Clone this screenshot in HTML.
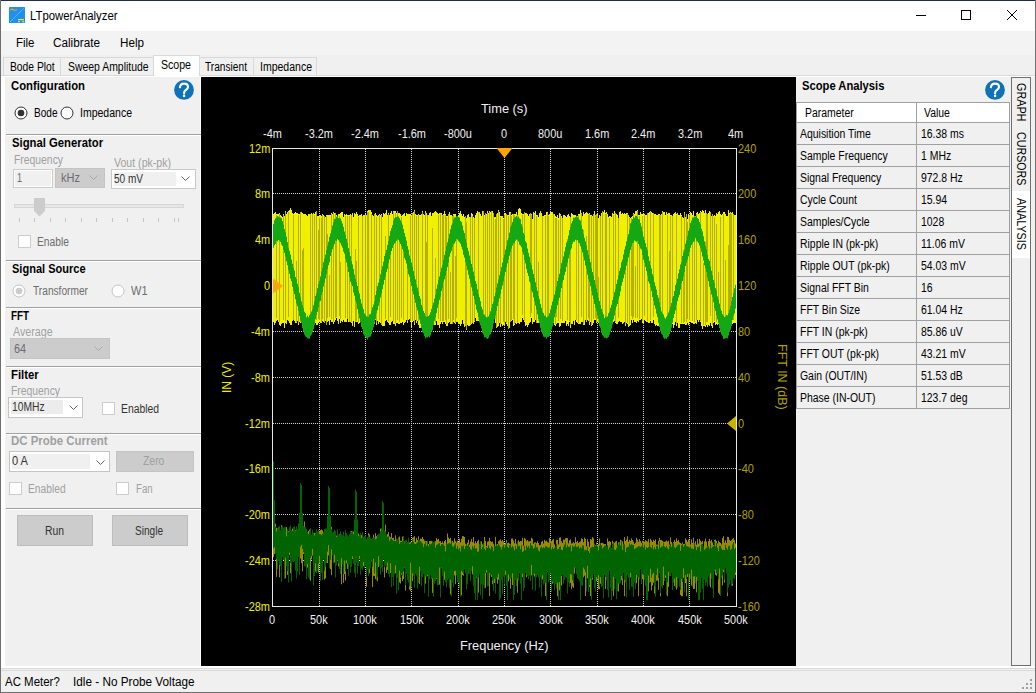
<!DOCTYPE html>
<html><head><meta charset="utf-8">
<style>
*{margin:0;padding:0;box-sizing:border-box;}
html,body{width:1036px;height:693px;overflow:hidden;background:#f0f0f0;font-family:"Liberation Sans",sans-serif;font-size:12px;color:#000;}
.a{position:absolute;white-space:nowrap;}
.t{position:absolute;white-space:nowrap;line-height:1;}
.b{font-weight:bold;}
.g{color:#a0a0a0;}
.sep{position:absolute;height:1px;background:#a0a0a0;border-bottom:1px solid #fff;}
</style></head><body>
<!-- window frame -->
<div class="a" style="left:0;top:0;width:1036px;height:693px;background:#f0f0f0;"></div>
<!-- title bar -->
<div class="a" style="left:0;top:0;width:1036px;height:31px;background:#fff;"></div>
<div class="a" style="left:0;top:0;width:1036px;height:1px;background:#1f2d47;"></div>
<div class="a" style="left:0;top:0;width:1px;height:693px;background:#6e6e6e;"></div>
<div class="a" style="left:1035px;top:0;width:1px;height:693px;background:#6e6e6e;"></div>
<div class="a" style="left:0;top:692px;width:1036px;height:1px;background:#6e6e6e;"></div>
<svg class="a" style="left:9px;top:7px" width="16" height="16" viewBox="0 0 16 16">
<rect x="0" y="0" width="16" height="16" rx="0.6" fill="#1e90f0"/>
<line x1="1" y1="15" x2="15" y2="1" stroke="#a8d4f8" stroke-width="0.8" stroke-dasharray="1 0.6"/>
<path d="M1.2 3.4L2.4 2.4H4L5 3.3H6.8L7.9 2.3" stroke="#f2aa00" stroke-width="1.1" fill="none"/>
<rect x="9" y="12" width="6" height="1.2" fill="#ffe030"/>
<rect x="9" y="14.2" width="2" height="1.1" fill="#ffe030"/><rect x="13" y="14.2" width="2" height="1.1" fill="#ffe030"/>
</svg>
<svg class="a" style="left:910px;top:5px" width="120" height="22">
<line x1="6" y1="10.5" x2="16" y2="10.5" stroke="#000" stroke-width="1"/>
<rect x="51.5" y="5.5" width="9" height="9" fill="none" stroke="#000" stroke-width="1"/>
<line x1="97" y1="5" x2="107" y2="15" stroke="#000" stroke-width="1"/>
<line x1="107" y1="5" x2="97" y2="15" stroke="#000" stroke-width="1"/>
</svg>
<!-- menu bar -->
<div class="a" style="left:1px;top:31px;width:1034px;height:24px;background:#f3f3f3;"></div>
<div class="t" style="left:30.40px;top:9.84px;font-size:12px;color:#000;transform:scaleX(0.9461);transform-origin:0 0;">LTpowerAnalyzer</div>
<div class="t" style="left:15.90px;top:36.84px;font-size:12px;color:#000;transform:scaleX(0.9564);transform-origin:0 0;">File</div>
<div class="t" style="left:53.30px;top:36.84px;font-size:12px;color:#000;transform:scaleX(0.9785);transform-origin:0 0;">Calibrate</div>
<div class="t" style="left:119.70px;top:36.84px;font-size:12px;color:#000;transform:scaleX(0.9722);transform-origin:0 0;">Help</div>
<div class="a" style="left:3px;top:57px;width:58px;height:19px;background:#f0f0f0;border:1px solid #d9d9d9;border-bottom:none;"></div>
<div class="a" style="left:60px;top:57px;width:94px;height:19px;background:#f0f0f0;border:1px solid #d9d9d9;border-bottom:none;"></div>
<div class="a" style="left:199px;top:57px;width:55px;height:19px;background:#f0f0f0;border:1px solid #d9d9d9;border-bottom:none;"></div>
<div class="a" style="left:253px;top:57px;width:64px;height:19px;background:#f0f0f0;border:1px solid #d9d9d9;border-bottom:none;"></div>
<div class="a" style="left:1px;top:75px;width:1034px;height:1px;background:#d9d9d9;"></div>
<div class="a" style="left:153px;top:55px;width:47px;height:22px;background:#fff;border:1px solid #d9d9d9;border-bottom:none;"></div>
<div class="t" style="left:9.60px;top:60.84px;font-size:12px;color:#000;transform:scaleX(0.8574);transform-origin:0 0;">Bode Plot</div>
<div class="t" style="left:67.50px;top:60.84px;font-size:12px;color:#000;transform:scaleX(0.8693);transform-origin:0 0;">Sweep Amplitude</div>
<div class="t" style="left:161.20px;top:59.14px;font-size:12px;color:#000;transform:scaleX(0.8819);transform-origin:0 0;">Scope</div>
<div class="t" style="left:204.80px;top:60.84px;font-size:12px;color:#000;transform:scaleX(0.8471);transform-origin:0 0;">Transient</div>
<div class="t" style="left:260.30px;top:60.84px;font-size:12px;color:#000;transform:scaleX(0.8760);transform-origin:0 0;">Impedance</div>

<!-- content area frame -->
<div class="a" style="left:4px;top:77px;width:1030px;height:590px;background:#f0f0f0;"></div>
<div class="a" style="left:1px;top:76px;width:1034px;height:1px;background:#fff;"></div>
<div class="a" style="left:1px;top:76px;width:4px;height:591px;background:#fff;"></div>
<div class="a" style="left:1px;top:666px;width:1034px;height:2px;background:#fff;"></div>
<div class="a" style="left:200px;top:77px;width:1px;height:589px;background:#fff;"></div>
<div class="a" style="left:6px;top:134px;width:195px;height:1px;background:#a0a0a0;"></div>
<div class="a" style="left:6px;top:135px;width:195px;height:1px;background:#fff;"></div>
<div class="a" style="left:6px;top:260px;width:195px;height:1px;background:#a0a0a0;"></div>
<div class="a" style="left:6px;top:261px;width:195px;height:1px;background:#fff;"></div>
<div class="a" style="left:6px;top:307px;width:195px;height:1px;background:#a0a0a0;"></div>
<div class="a" style="left:6px;top:308px;width:195px;height:1px;background:#fff;"></div>
<div class="a" style="left:6px;top:366px;width:195px;height:1px;background:#a0a0a0;"></div>
<div class="a" style="left:6px;top:367px;width:195px;height:1px;background:#fff;"></div>
<div class="a" style="left:6px;top:433px;width:195px;height:1px;background:#a0a0a0;"></div>
<div class="a" style="left:6px;top:434px;width:195px;height:1px;background:#fff;"></div>
<div class="a" style="left:6px;top:508px;width:195px;height:1px;background:#a0a0a0;"></div>
<div class="a" style="left:6px;top:509px;width:195px;height:1px;background:#fff;"></div>
<svg class="a" style="left:173px;top:79px" width="22" height="22" viewBox="0 0 22 22"><circle cx="11" cy="10.9" r="9.9" fill="#0f72b8"/><path d="M6.9 8.3C7.1 5.6 9 4.6 11 4.6C13.5 4.6 15 6.1 15 8C15 10 13.2 10.7 12.1 11.6C11.3 12.3 11.1 13 11.1 14.3" stroke="#fff" stroke-width="2.1" fill="none" stroke-linecap="round"/><circle cx="11.1" cy="16.9" r="1.3" fill="#fff"/></svg>
<div class="t" style="left:11.00px;top:79.84px;font-size:12px;color:#000;font-weight:bold;transform:scaleX(0.9410);transform-origin:0 0;">Configuration</div>
<svg class="a" style="left:14px;top:106px" width="14" height="14" viewBox="0 0 14 14"><circle cx="7" cy="7" r="6" fill="#fff" stroke="#333" stroke-width="1"/><circle cx="7" cy="7" r="3.3" fill="#333"/></svg>
<div class="t" style="left:34.00px;top:106.84px;font-size:12px;color:#000;transform:scaleX(0.8388);transform-origin:0 0;">Bode</div>
<svg class="a" style="left:60px;top:106px" width="14" height="14" viewBox="0 0 14 14"><circle cx="7" cy="7" r="6" fill="#fff" stroke="#333" stroke-width="1"/></svg>
<div class="t" style="left:80.00px;top:106.84px;font-size:12px;color:#000;transform:scaleX(0.8760);transform-origin:0 0;">Impedance</div>
<div class="t" style="left:12.00px;top:137.14px;font-size:12px;color:#000;font-weight:bold;transform:scaleX(0.9415);transform-origin:0 0;">Signal Generator</div>
<div class="t" style="left:14.30px;top:154.14px;font-size:12px;color:#a0a0a0;transform:scaleX(0.8644);transform-origin:0 0;">Frequency</div>
<div class="a" style="left:13px;top:169px;width:40px;height:19px;border:1px solid #cccccc;background:#f0f0f0;box-shadow:inset 0 0 0 1px #fff;"></div>
<div class="t" style="left:17.00px;top:172.34px;font-size:12px;color:#6d6d6d;transform:scaleX(0.7494);transform-origin:0 0;">1</div>
<div class="a" style="left:55px;top:168px;width:50px;height:20px;background:#cccccc;border:1px solid #c4c4c4;"></div>
<div class="t" style="left:61.40px;top:172.34px;font-size:12px;color:#6d6d6d;transform:scaleX(0.9191);transform-origin:0 0;">kHz</div>
<svg class="a" style="left:89px;top:175px" width="10" height="6"><polyline points="0.5,0.5 4.5,4.5 8.5,0.5" fill="none" stroke="#a8a8a8" stroke-width="1"/></svg>
<div class="t" style="left:114.30px;top:156.54px;font-size:12px;color:#a0a0a0;transform:scaleX(0.8812);transform-origin:0 0;">Vout (pk-pk)</div>
<div class="a" style="left:111px;top:169px;width:85px;height:20px;background:#fff;border:1px solid #c8c8c8;"></div>
<div class="a" style="left:114px;top:172px;width:62px;height:14px;background:#f0f0f0;"></div>
<div class="t" style="left:114.30px;top:172.84px;font-size:12px;color:#333;transform:scaleX(0.8364);transform-origin:0 0;">50 mV</div>
<svg class="a" style="left:181px;top:176px" width="10" height="6"><polyline points="0.5,0.5 4.5,4.5 8.5,0.5" fill="none" stroke="#606060" stroke-width="1"/></svg>
<div class="a" style="left:14px;top:204px;width:170px;height:4px;background:#e7e7e7;border:1px solid #d6d6d6;"></div>
<svg class="a" style="left:34px;top:198px" width="12" height="20"><polygon points="0,0 11,0 11,13 5.5,18.5 0,13" fill="#cccccc"/></svg>
<div class="a" style="left:19px;top:218px;width:1px;height:4px;background:#c4c4c4;"></div>
<div class="a" style="left:34px;top:218px;width:1px;height:4px;background:#c4c4c4;"></div>
<div class="a" style="left:50px;top:218px;width:1px;height:4px;background:#c4c4c4;"></div>
<div class="a" style="left:65px;top:218px;width:1px;height:4px;background:#c4c4c4;"></div>
<div class="a" style="left:81px;top:218px;width:1px;height:4px;background:#c4c4c4;"></div>
<div class="a" style="left:96px;top:218px;width:1px;height:4px;background:#c4c4c4;"></div>
<div class="a" style="left:112px;top:218px;width:1px;height:4px;background:#c4c4c4;"></div>
<div class="a" style="left:127px;top:218px;width:1px;height:4px;background:#c4c4c4;"></div>
<div class="a" style="left:143px;top:218px;width:1px;height:4px;background:#c4c4c4;"></div>
<div class="a" style="left:158px;top:218px;width:1px;height:4px;background:#c4c4c4;"></div>
<div class="a" style="left:174px;top:218px;width:1px;height:4px;background:#c4c4c4;"></div>
<div class="a" style="left:178px;top:218px;width:1px;height:4px;background:#c4c4c4;"></div>
<div class="a" style="left:18px;top:235px;width:13px;height:13px;background:#fff;border:1px solid #cccccc;"></div>
<div class="t" style="left:37.20px;top:235.84px;font-size:12px;color:#6d6d6d;transform:scaleX(0.8565);transform-origin:0 0;">Enable</div>
<div class="t" style="left:12.00px;top:263.04px;font-size:12px;color:#000;font-weight:bold;transform:scaleX(0.9189);transform-origin:0 0;">Signal Source</div>
<svg class="a" style="left:12px;top:284px" width="14" height="14" viewBox="0 0 14 14"><circle cx="7" cy="7" r="6" fill="#fff" stroke="#c4c4c4" stroke-width="1"/><circle cx="7" cy="7" r="3.3" fill="#cccccc"/></svg>
<div class="t" style="left:32.70px;top:285.04px;font-size:12px;color:#6d6d6d;transform:scaleX(0.8474);transform-origin:0 0;">Transformer</div>
<svg class="a" style="left:111px;top:284px" width="14" height="14" viewBox="0 0 14 14"><circle cx="7" cy="7" r="6" fill="#fff" stroke="#c4c4c4" stroke-width="1"/></svg>
<div class="t" style="left:130.70px;top:285.04px;font-size:12px;color:#6d6d6d;transform:scaleX(0.9167);transform-origin:0 0;">W1</div>
<div class="t" style="left:11.30px;top:309.84px;font-size:12px;color:#000;font-weight:bold;transform:scaleX(0.8188);transform-origin:0 0;">FFT</div>
<div class="t" style="left:12.90px;top:325.64px;font-size:12px;color:#a0a0a0;transform:scaleX(0.8905);transform-origin:0 0;">Average</div>
<div class="a" style="left:10px;top:338px;width:100px;height:21px;background:#cccccc;border:1px solid #c4c4c4;"></div>
<div class="t" style="left:13.90px;top:342.84px;font-size:12px;color:#6d6d6d;transform:scaleX(0.8993);transform-origin:0 0;">64</div>
<svg class="a" style="left:94px;top:346px" width="10" height="6"><polyline points="0.5,0.5 4.5,4.5 8.5,0.5" fill="none" stroke="#a8a8a8" stroke-width="1"/></svg>
<div class="t" style="left:11.30px;top:368.64px;font-size:12px;color:#000;font-weight:bold;transform:scaleX(0.9445);transform-origin:0 0;">Filter</div>
<div class="t" style="left:11.30px;top:385.04px;font-size:12px;color:#a0a0a0;transform:scaleX(0.8644);transform-origin:0 0;">Frequency</div>
<div class="a" style="left:8px;top:397px;width:75px;height:21px;background:#fff;border:1px solid #c4c4c4;"></div>
<div class="a" style="left:11px;top:400px;width:52px;height:14px;background:#ececec;"></div>
<div class="t" style="left:11.90px;top:400.84px;font-size:12px;color:#333;transform:scaleX(0.8602);transform-origin:0 0;">10MHz</div>
<svg class="a" style="left:69px;top:405px" width="10" height="6"><polyline points="0.5,0.5 4.5,4.5 8.5,0.5" fill="none" stroke="#606060" stroke-width="1"/></svg>
<div class="a" style="left:102px;top:402px;width:13px;height:13px;background:#fff;border:1px solid #cccccc;"></div>
<div class="t" style="left:121.20px;top:402.84px;font-size:12px;color:#333;transform:scaleX(0.8630);transform-origin:0 0;">Enabled</div>
<div class="t" style="left:11.30px;top:434.64px;font-size:12px;color:#a0a0a0;font-weight:bold;transform:scaleX(0.9532);transform-origin:0 0;">DC Probe Current</div>
<div class="a" style="left:9px;top:451px;width:101px;height:21px;background:#fff;border:1px solid #c4c4c4;"></div>
<div class="a" style="left:12px;top:454px;width:78px;height:15px;background:#f0f0f0;"></div>
<div class="t" style="left:12.30px;top:454.64px;font-size:12px;color:#333;transform:scaleX(0.9225);transform-origin:0 0;">0 A</div>
<svg class="a" style="left:96px;top:460px" width="10" height="6"><polyline points="0.5,0.5 4.5,4.5 8.5,0.5" fill="none" stroke="#606060" stroke-width="1"/></svg>
<div class="a" style="left:116px;top:451px;width:78px;height:21px;background:#cccccc;border:1px solid #c4c4c4;"></div>
<div class="t" style="left:143.00px;top:454.64px;font-size:12px;color:#a0a0a0;transform:scaleX(0.8674);transform-origin:0 0;">Zero</div>
<div class="a" style="left:9px;top:482px;width:13px;height:13px;background:#fff;border:1px solid #cccccc;"></div>
<div class="t" style="left:28.30px;top:482.84px;font-size:12px;color:#a0a0a0;transform:scaleX(0.8539);transform-origin:0 0;">Enabled</div>
<div class="a" style="left:116px;top:482px;width:13px;height:13px;background:#fff;border:1px solid #cccccc;"></div>
<div class="t" style="left:135.50px;top:482.84px;font-size:12px;color:#a0a0a0;transform:scaleX(0.8030);transform-origin:0 0;">Fan</div>
<div class="a" style="left:17px;top:515px;width:76px;height:31px;background:#cccccc;border:1px solid #bdbdbd;"></div>
<div class="t" style="left:44.60px;top:524.84px;font-size:12px;color:#333;transform:scaleX(0.8630);transform-origin:0 0;">Run</div>
<div class="a" style="left:112px;top:515px;width:76px;height:31px;background:#cccccc;border:1px solid #bdbdbd;"></div>
<div class="t" style="left:135.20px;top:524.84px;font-size:12px;color:#333;transform:scaleX(0.8393);transform-origin:0 0;">Single</div>

<div class="a" style="left:201px;top:77px;width:595px;height:589px;background:#000;"></div>
<svg class="a" style="left:0;top:0" width="1036" height="693" viewBox="0 0 1036 693" shape-rendering="crispEdges"><defs><clipPath id="pc"><rect x="273" y="149" width="463" height="457"/></clipPath></defs><path d="M319.5 149V606M365.5 149V606M411.5 149V606M458.5 149V606M504.5 149V606M550.5 149V606M597.5 149V606M643.5 149V606M689.5 149V606M273 193.5H736M273 239.5H736M273 285.5H736M273 331.5H736M273 377.5H736M273 423.5H736M273 468.5H736M273 514.5H736M273 560.5H736" stroke="#d8d8d8" stroke-width="1" stroke-dasharray="1 1" fill="none"/><g clip-path="url(#pc)"><path d="M273.5 214.1V322.2M274.5 212.5V324.7M275.5 212.0V322.8M276.5 214.3V321.3M277.5 214.1V320.1M278.5 214.2V321.7M279.5 212.9V324.7M280.5 214.5V326.2M281.5 216.4V324.2M282.5 216.5V322.8M283.5 214.3V323.2M284.5 216.2V327.5M285.5 210.9V323.0M286.5 213.9V323.9M287.5 211.7V320.3M288.5 211.4V321.0M289.5 209.5V323.4M290.5 208.1V324.5M291.5 209.8V325.3M292.5 212.6V321.0M293.5 213.8V320.0M294.5 213.0V321.2M295.5 211.8V322.6M296.5 212.5V322.5M297.5 212.7V320.6M298.5 213.5V324.7M299.5 214.1V322.1M300.5 212.0V323.0M301.5 211.5V319.8M302.5 213.4V320.6M303.5 214.0V321.5M304.5 214.0V325.1M305.5 213.6V327.7M306.5 214.5V325.4M307.5 215.5V319.9M308.5 213.7V321.3M309.5 213.6V321.6M310.5 213.7V320.7M311.5 212.8V320.4M312.5 213.5V321.4M313.5 213.3V322.1M314.5 214.3V320.6M315.5 212.3V323.1M316.5 210.9V324.9M317.5 216.4V324.7M318.5 216.1V322.6M319.5 216.2V322.2M320.5 215.3V323.0M321.5 216.0V322.5M322.5 213.7V321.0M323.5 215.2V321.6M324.5 216.0V323.0M325.5 216.6V320.5M326.5 214.7V325.3M327.5 215.3V322.4M328.5 214.9V321.1M329.5 215.0V325.1M330.5 214.7V320.4M331.5 212.7V321.5M332.5 214.0V322.0M333.5 211.7V324.4M334.5 213.4V322.0M335.5 212.7V320.4M336.5 214.7V318.3M337.5 215.6V321.0M338.5 213.8V324.0M339.5 214.2V319.4M340.5 213.3V323.0M341.5 211.5V320.7M342.5 211.6V321.5M343.5 216.5V320.0M344.5 214.2V322.3M345.5 215.1V322.2M346.5 214.3V321.8M347.5 214.7V319.2M348.5 214.8V321.9M349.5 214.9V322.3M350.5 213.5V321.9M351.5 214.7V323.2M352.5 213.1V326.4M353.5 217.0V321.2M354.5 213.2V326.7M355.5 213.9V322.4M356.5 212.4V322.2M357.5 214.3V322.0M358.5 216.2V323.8M359.5 215.0V322.7M360.5 215.1V322.3M361.5 214.0V324.4M362.5 215.7V323.9M363.5 215.1V324.3M364.5 215.2V324.2M365.5 214.4V321.3M366.5 215.4V322.9M367.5 210.7V323.0M368.5 210.2V326.1M369.5 209.6V327.1M370.5 210.2V320.3M371.5 212.1V320.6M372.5 215.3V324.2M373.5 216.2V320.3M374.5 213.7V323.8M375.5 213.3V320.3M376.5 215.4V324.6M377.5 216.1V320.7M378.5 214.6V323.7M379.5 213.5V322.4M380.5 214.9V323.3M381.5 214.1V325.1M382.5 216.5V325.5M383.5 212.9V326.1M384.5 213.6V325.9M385.5 212.7V321.0M386.5 210.4V320.4M387.5 215.0V322.2M388.5 212.9V323.1M389.5 215.1V325.0M390.5 213.0V324.5M391.5 211.1V322.3M392.5 213.8V320.8M393.5 210.7V323.7M394.5 211.1V323.5M395.5 211.4V325.6M396.5 213.1V322.8M397.5 211.2V323.4M398.5 213.2V324.2M399.5 213.2V323.8M400.5 214.0V322.7M401.5 215.6V323.2M402.5 215.3V322.3M403.5 213.6V325.3M404.5 213.2V322.5M405.5 215.6V321.5M406.5 212.7V320.0M407.5 213.5V323.1M408.5 214.1V320.2M409.5 213.7V319.4M410.5 214.2V321.7M411.5 215.2V326.6M412.5 212.8V322.1M413.5 211.6V321.4M414.5 210.1V325.3M415.5 213.7V319.8M416.5 214.7V323.3M417.5 215.3V320.6M418.5 214.3V324.8M419.5 215.1V327.6M420.5 214.7V328.1M421.5 214.4V327.1M422.5 211.2V324.8M423.5 213.6V324.2M424.5 214.6V323.5M425.5 211.0V325.6M426.5 212.7V324.1M427.5 214.7V327.3M428.5 214.6V322.6M429.5 213.1V324.4M430.5 211.5V323.8M431.5 216.1V324.2M432.5 212.8V327.4M433.5 213.2V324.3M434.5 212.3V324.5M435.5 210.8V324.8M436.5 211.9V321.1M437.5 213.3V324.9M438.5 213.9V325.3M439.5 213.3V327.5M440.5 212.9V324.1M441.5 213.2V321.5M442.5 214.7V323.6M443.5 214.1V322.3M444.5 211.1V321.8M445.5 213.8V324.3M446.5 215.5V325.8M447.5 216.3V325.9M448.5 214.0V322.5M449.5 212.3V321.9M450.5 215.2V324.0M451.5 215.3V324.2M452.5 216.1V324.2M453.5 214.0V321.9M454.5 213.7V322.6M455.5 214.2V323.6M456.5 217.7V321.5M457.5 216.3V322.3M458.5 214.7V324.1M459.5 212.6V323.5M460.5 211.1V325.5M461.5 213.7V324.3M462.5 215.8V320.0M463.5 214.2V323.9M464.5 217.0V326.5M465.5 216.2V326.4M466.5 218.1V329.6M467.5 215.2V325.2M468.5 213.6V326.2M469.5 217.4V325.8M470.5 216.6V324.6M471.5 212.8V324.4M472.5 214.3V322.9M473.5 217.2V324.4M474.5 218.2V322.2M475.5 214.9V318.4M476.5 212.9V320.5M477.5 210.6V320.5M478.5 211.7V320.9M479.5 212.1V320.8M480.5 214.1V324.6M481.5 215.9V322.0M482.5 210.6V325.4M483.5 210.7V322.4M484.5 214.7V322.4M485.5 212.5V319.8M486.5 214.3V323.7M487.5 211.3V322.3M488.5 212.7V324.6M489.5 211.0V323.3M490.5 212.4V320.0M491.5 211.2V324.1M492.5 211.4V319.8M493.5 212.6V322.8M494.5 216.8V318.0M495.5 216.8V323.0M496.5 214.2V327.8M497.5 213.0V326.6M498.5 210.3V325.7M499.5 211.6V322.5M500.5 216.4V326.6M501.5 216.2V323.6M502.5 215.8V326.1M503.5 218.4V324.6M504.5 213.3V325.3M505.5 212.5V321.9M506.5 213.6V324.0M507.5 214.5V326.1M508.5 215.2V328.8M509.5 212.3V327.6M510.5 212.0V322.4M511.5 215.4V321.3M512.5 214.3V320.4M513.5 213.9V326.4M514.5 213.8V324.6M515.5 213.6V322.7M516.5 211.5V324.2M517.5 214.5V322.7M518.5 208.9V322.6M519.5 208.4V323.9M520.5 209.4V322.4M521.5 212.7V321.6M522.5 214.2V318.4M523.5 213.6V320.4M524.5 212.0V321.5M525.5 213.3V326.3M526.5 212.5V325.3M527.5 213.9V327.2M528.5 216.4V324.8M529.5 213.6V323.1M530.5 212.7V322.1M531.5 214.4V317.6M532.5 218.8V324.1M533.5 212.4V321.6M534.5 213.4V322.3M535.5 211.0V319.9M536.5 215.4V323.0M537.5 214.8V322.5M538.5 216.8V322.5M539.5 213.1V320.6M540.5 211.1V324.4M541.5 213.1V323.1M542.5 215.5V319.7M543.5 215.9V320.8M544.5 214.9V324.6M545.5 215.4V326.0M546.5 211.6V328.3M547.5 212.2V328.3M548.5 215.4V325.8M549.5 214.2V324.6M550.5 212.0V322.9M551.5 211.6V324.1M552.5 212.1V324.1M553.5 214.1V323.0M554.5 213.6V325.1M555.5 216.0V325.5M556.5 216.6V324.0M557.5 214.5V323.1M558.5 218.0V322.6M559.5 213.1V327.3M560.5 214.0V326.2M561.5 216.3V322.8M562.5 217.5V323.2M563.5 215.3V322.8M564.5 215.3V323.2M565.5 215.5V321.3M566.5 216.7V325.9M567.5 214.8V324.2M568.5 213.5V325.9M569.5 215.7V322.1M570.5 216.8V328.2M571.5 213.3V323.9M572.5 214.4V324.3M573.5 214.7V321.1M574.5 214.6V324.5M575.5 215.0V320.2M576.5 216.0V322.4M577.5 216.3V322.9M578.5 214.0V324.1M579.5 213.6V323.7M580.5 210.3V324.0M581.5 212.9V321.9M582.5 216.3V321.8M583.5 211.9V325.1M584.5 213.9V324.7M585.5 213.0V320.2M586.5 212.4V322.2M587.5 212.9V320.1M588.5 213.9V321.2M589.5 212.6V324.5M590.5 214.6V322.0M591.5 214.5V326.4M592.5 216.4V324.8M593.5 213.6V323.4M594.5 211.1V319.6M595.5 214.7V320.1M596.5 213.8V322.6M597.5 214.4V322.1M598.5 218.1V323.2M599.5 215.4V322.6M600.5 215.9V320.7M601.5 212.8V322.1M602.5 210.6V324.1M603.5 211.9V323.2M604.5 210.0V324.0M605.5 213.0V324.3M606.5 211.8V326.0M607.5 213.6V324.7M608.5 217.2V324.4M609.5 215.8V326.0M610.5 215.5V322.5M611.5 216.7V323.9M612.5 213.1V320.8M613.5 213.7V321.9M614.5 211.0V321.2M615.5 212.8V322.7M616.5 214.3V324.4M617.5 215.2V324.1M618.5 217.5V321.5M619.5 212.4V320.6M620.5 210.8V322.1M621.5 214.2V321.5M622.5 213.4V324.4M623.5 213.6V322.7M624.5 212.9V322.4M625.5 213.5V325.6M626.5 213.4V322.6M627.5 213.2V323.5M628.5 214.9V326.8M629.5 217.2V326.0M630.5 217.9V324.8M631.5 217.4V319.6M632.5 216.0V323.0M633.5 212.8V319.7M634.5 214.1V322.3M635.5 210.6V321.7M636.5 211.1V322.7M637.5 210.2V320.6M638.5 214.5V321.6M639.5 214.7V319.7M640.5 211.9V319.9M641.5 213.6V318.7M642.5 213.6V323.1M643.5 213.1V324.1M644.5 214.0V319.7M645.5 215.0V320.9M646.5 215.0V321.6M647.5 212.6V321.5M648.5 212.9V322.8M649.5 211.9V322.6M650.5 211.3V321.4M651.5 211.6V322.8M652.5 212.9V323.3M653.5 212.8V320.3M654.5 213.7V323.6M655.5 214.2V325.9M656.5 214.8V324.9M657.5 215.4V325.6M658.5 214.4V326.3M659.5 214.2V325.0M660.5 214.9V323.5M661.5 214.1V325.2M662.5 211.4V325.0M663.5 211.9V326.9M664.5 211.6V324.5M665.5 215.2V323.6M666.5 212.0V324.6M667.5 214.4V323.4M668.5 212.8V319.5M669.5 212.8V320.5M670.5 214.9V319.4M671.5 215.1V323.1M672.5 216.0V323.5M673.5 213.9V327.9M674.5 212.9V324.7M675.5 212.0V322.2M676.5 214.4V326.2M677.5 213.4V322.9M678.5 215.0V328.2M679.5 215.0V327.7M680.5 212.9V324.3M681.5 215.1V323.6M682.5 216.6V323.5M683.5 217.5V324.2M684.5 211.6V324.0M685.5 217.3V325.1M686.5 213.5V324.6M687.5 219.2V323.4M688.5 213.7V324.5M689.5 215.1V322.2M690.5 211.6V322.3M691.5 212.7V322.6M692.5 214.6V323.3M693.5 211.4V323.8M694.5 215.9V324.0M695.5 215.5V322.5M696.5 213.1V324.2M697.5 211.6V320.1M698.5 213.6V322.4M699.5 212.7V320.0M700.5 211.4V322.2M701.5 212.3V326.1M702.5 209.6V329.2M703.5 210.6V325.7M704.5 212.6V325.6M705.5 210.0V326.5M706.5 212.5V324.7M707.5 213.7V326.9M708.5 212.9V325.1M709.5 211.1V326.1M710.5 211.6V322.8M711.5 215.8V326.0M712.5 213.6V327.8M713.5 216.1V323.2M714.5 215.1V321.8M715.5 216.4V325.4M716.5 212.7V323.6M717.5 213.7V324.6M718.5 212.4V324.2M719.5 211.1V321.1M720.5 214.4V321.6M721.5 214.7V321.4M722.5 214.3V324.8M723.5 212.1V322.5M724.5 211.5V325.1M725.5 213.5V324.1M726.5 215.5V324.7M727.5 216.0V321.9M728.5 210.3V325.1M729.5 213.4V324.6M730.5 212.1V325.9M731.5 213.2V323.7M732.5 212.1V323.5M733.5 213.6V323.4M734.5 214.9V322.9M735.5 215.0V323.2" stroke="#f0f000" stroke-width="1" fill="none" shape-rendering="crispEdges"/><path d="M276.5 214.6V317.5M279.5 213.8V321.7M283.5 214.6V320.2M285.5 211.5V321.4M288.5 212.4V316.7M293.5 214.9V319.6M296.5 261.2V322.4M298.5 214.8V323.3M300.5 212.1V322.1M302.5 250.3V317.9M303.5 247.8V321.3M310.5 214.1V318.5M312.5 213.7V320.2M314.5 215.3V318.5M316.5 211.1V320.3M318.5 230.4V318.9M319.5 217.6V320.0M321.5 217.6V322.4M322.5 214.6V319.0M324.5 216.3V322.9M326.5 215.8V325.3M327.5 233.8V318.3M329.5 275.0V317.0M331.5 214.0V318.9M333.5 212.6V322.0M335.5 213.4V318.4M336.5 228.9V317.2M339.5 216.0V316.3M340.5 261.9V319.3M345.5 216.3V318.1M347.5 215.5V318.7M349.5 215.7V322.0M351.5 215.3V321.9M355.5 249.3V322.4M356.5 261.0V321.2M358.5 216.5V321.6M362.5 216.3V320.9M365.5 215.0V320.2M367.5 211.7V322.1M368.5 212.2V324.4M371.5 214.2V318.4M374.5 214.0V323.8M376.5 216.5V323.0M379.5 214.5V319.6M381.5 215.0V324.8M385.5 235.8V319.4M388.5 214.1V321.1M390.5 255.5V317.0M393.5 212.0V320.7M395.5 212.6V323.4M397.5 211.2V320.0M399.5 233.7V322.4M401.5 217.4V317.5M403.5 239.3V319.7M407.5 247.8V320.9M410.5 215.6V320.9M412.5 213.4V321.2M414.5 210.8V323.0M416.5 216.1V321.2M418.5 215.3V321.4M422.5 212.2V324.1M425.5 212.9V319.8M426.5 242.4V323.6M427.5 215.4V321.2M432.5 227.8V325.7M435.5 258.3V322.7M438.5 215.1V319.0M440.5 213.9V321.4M442.5 215.4V321.3M443.5 215.3V321.2M445.5 214.8V319.5M446.5 217.4V323.8M448.5 214.3V319.2M450.5 272.3V322.9M452.5 216.2V323.7M453.5 214.8V319.9M455.5 255.5V323.1M456.5 217.9V318.0M465.5 216.4V325.9M466.5 221.7V329.3M470.5 216.8V324.2M472.5 215.5V322.8M474.5 218.4V320.9M478.5 212.0V320.0M483.5 211.2V321.9M485.5 212.9V319.1M487.5 212.7V319.6M489.5 211.6V320.7M491.5 211.4V321.2M493.5 213.3V318.5M495.5 218.5V319.1M496.5 214.3V327.1M498.5 210.7V323.1M500.5 216.8V324.2M503.5 219.3V321.5M504.5 214.9V322.5M506.5 214.3V323.3M508.5 215.9V328.7M510.5 213.1V321.9M511.5 216.1V319.6M513.5 214.3V318.7M514.5 215.2V323.8M517.5 215.1V322.5M522.5 215.4V315.4M524.5 212.3V321.0M530.5 212.7V317.0M531.5 214.5V312.6M534.5 213.9V319.5M536.5 216.2V322.7M538.5 262.4V321.3M542.5 215.6V319.6M545.5 215.9V322.7M547.5 212.7V325.3M548.5 216.2V325.4M553.5 214.3V320.4M555.5 217.5V323.8M556.5 217.7V317.3M558.5 220.2V321.3M560.5 214.6V319.2M562.5 218.1V321.4M567.5 238.7V319.5M569.5 231.5V320.7M570.5 217.1V325.4M576.5 216.2V320.0M578.5 215.1V323.2M581.5 213.1V317.3M583.5 229.5V323.9M586.5 236.0V321.0M588.5 214.7V318.2M589.5 213.5V322.3M591.5 215.8V325.4M593.5 214.0V318.7M595.5 214.9V318.2M596.5 214.1V322.2M597.5 215.6V319.0M598.5 277.0V321.9M600.5 216.1V317.4M602.5 211.0V319.8M605.5 214.2V319.8M606.5 214.0V324.1M609.5 218.4V325.0M613.5 214.7V317.7M615.5 213.0V322.2M618.5 217.9V318.3M625.5 248.2V323.8M627.5 213.7V322.6M629.5 218.0V323.8M631.5 217.9V316.3M632.5 229.8V318.7M633.5 213.8V316.5M635.5 266.1V318.1M637.5 211.0V318.3M639.5 215.8V318.8M642.5 215.5V321.4M644.5 215.2V315.7M647.5 213.4V321.1M650.5 211.9V320.2M653.5 213.1V316.9M659.5 214.8V320.3M660.5 215.1V322.5M662.5 212.4V318.5M667.5 214.5V323.1M669.5 250.5V320.3M670.5 216.3V314.9M672.5 216.2V322.9M676.5 215.4V323.9M681.5 216.3V322.9M683.5 249.9V322.8M684.5 212.6V321.7M686.5 214.2V322.2M687.5 221.8V319.0M689.5 215.3V320.1M692.5 217.2V320.9M694.5 217.5V321.8M696.5 213.9V320.2M700.5 212.4V321.4M703.5 262.8V325.1M705.5 241.8V325.4M706.5 212.8V322.2M707.5 213.7V322.4M710.5 212.2V316.0M712.5 214.4V324.8M714.5 216.9V320.7M716.5 223.7V322.2M718.5 272.0V322.0M720.5 217.1V319.5M723.5 213.5V317.8M725.5 259.5V323.1M728.5 245.2V324.0M729.5 213.8V320.1M730.5 212.8V325.7M731.5 213.9V320.8M733.5 214.1V319.9" stroke="#b4b000" stroke-width="1" fill="none" shape-rendering="crispEdges"/><path d="M273.5 224.1V247.7M274.5 220.2V245.2M275.5 218.3V243.9M276.5 217.7V240.8M277.5 216.0V241.4M278.5 216.7V240.0M279.5 217.5V240.7M280.5 217.5V241.9M281.5 218.1V244.6M282.5 221.1V246.0M283.5 224.7V249.9M284.5 229.2V252.9M285.5 232.3V256.8M286.5 236.6V261.3M287.5 242.2V265.3M288.5 247.6V269.9M289.5 250.8V273.9M290.5 254.5V278.7M291.5 259.6V281.3M292.5 263.8V286.8M293.5 267.9V291.0M294.5 270.6V294.1M295.5 277.0V299.3M296.5 279.0V303.6M297.5 283.9V306.3M298.5 286.8V310.7M299.5 292.8V316.0M300.5 296.7V320.5M301.5 301.5V323.1M302.5 305.1V328.1M303.5 308.1V331.7M304.5 311.8V334.5M305.5 313.2V336.3M306.5 317.3V337.0M307.5 315.7V338.3M308.5 317.3V338.5M309.5 315.1V338.5M310.5 313.7V335.8M311.5 311.5V334.6M312.5 309.4V332.5M313.5 305.3V329.3M314.5 301.2V325.2M315.5 295.9V319.2M316.5 293.2V315.1M317.5 288.2V311.8M318.5 283.8V307.3M319.5 280.9V301.6M320.5 276.4V300.8M321.5 271.5V294.9M322.5 267.8V292.0M323.5 262.2V286.5M324.5 258.7V282.6M325.5 254.7V278.5M326.5 250.1V273.8M327.5 245.7V269.1M328.5 241.8V265.2M329.5 236.9V262.2M330.5 233.4V255.9M331.5 230.0V252.3M332.5 225.6V249.3M333.5 222.1V246.5M334.5 219.0V244.1M335.5 219.1V240.6M336.5 216.8V241.2M337.5 215.7V239.2M338.5 218.0V240.2M339.5 218.5V241.7M340.5 218.4V243.2M341.5 220.8V245.7M342.5 223.5V247.6M343.5 226.9V251.6M344.5 231.5V253.7M345.5 234.7V258.8M346.5 238.9V262.5M347.5 242.9V266.8M348.5 248.1V272.0M349.5 252.1V276.9M350.5 256.2V281.9M351.5 261.2V284.3M352.5 264.4V286.2M353.5 268.9V292.5M354.5 274.5V295.7M355.5 278.8V300.7M356.5 282.2V303.3M357.5 286.0V309.1M358.5 290.6V313.6M359.5 293.5V318.4M360.5 299.1V322.4M361.5 303.5V327.0M362.5 306.8V329.1M363.5 309.2V334.2M364.5 313.4V335.6M365.5 314.6V337.2M366.5 316.4V337.8M367.5 316.6V339.6M368.5 316.7V337.6M369.5 314.4V336.9M370.5 313.9V336.5M371.5 310.6V333.8M372.5 307.3V330.0M373.5 304.6V327.3M374.5 301.1V322.3M375.5 295.1V319.2M376.5 290.8V313.4M377.5 286.1V310.2M378.5 282.7V305.9M379.5 279.0V302.4M380.5 274.3V297.5M381.5 269.6V293.6M382.5 266.2V289.1M383.5 261.7V284.6M384.5 256.1V279.9M385.5 253.4V276.6M386.5 249.8V272.1M387.5 245.1V268.8M388.5 240.9V263.2M389.5 235.9V259.5M390.5 231.1V255.5M391.5 228.2V251.0M392.5 225.2V247.9M393.5 220.7V245.2M394.5 218.2V243.5M395.5 217.2V242.8M396.5 217.0V240.9M397.5 216.3V239.1M398.5 216.5V240.1M399.5 218.1V241.9M400.5 220.2V244.1M401.5 222.0V246.0M402.5 224.7V249.2M403.5 229.0V251.6M404.5 233.0V257.9M405.5 236.8V260.1M406.5 240.6V263.5M407.5 246.1V268.8M408.5 249.7V274.2M409.5 255.5V276.6M410.5 258.7V281.8M411.5 262.5V286.0M412.5 266.4V291.0M413.5 271.1V294.3M414.5 275.8V298.9M415.5 279.4V302.8M416.5 284.6V307.1M417.5 287.5V310.4M418.5 291.6V314.5M419.5 296.1V319.6M420.5 298.8V323.7M421.5 304.9V328.0M422.5 307.6V332.3M423.5 310.9V333.4M424.5 313.0V336.3M425.5 316.3V338.4M426.5 316.9V337.3M427.5 316.5V337.5M428.5 316.0V336.6M429.5 314.7V337.4M430.5 312.3V335.5M431.5 308.9V331.6M432.5 305.6V330.2M433.5 302.7V325.1M434.5 298.6V320.9M435.5 294.6V317.3M436.5 288.9V313.2M437.5 284.5V307.8M438.5 279.8V304.4M439.5 276.5V300.0M440.5 272.1V296.8M441.5 267.8V291.0M442.5 264.8V288.3M443.5 259.9V281.9M444.5 255.0V279.3M445.5 251.2V275.7M446.5 246.0V270.9M447.5 242.3V267.1M448.5 238.5V262.7M449.5 233.8V256.7M450.5 229.3V253.2M451.5 225.2V250.8M452.5 223.5V247.1M453.5 219.2V244.4M454.5 217.5V243.5M455.5 217.1V241.5M456.5 216.2V238.9M457.5 215.9V239.5M458.5 217.1V241.2M459.5 217.4V242.3M460.5 221.0V243.8M461.5 221.9V246.8M462.5 225.5V249.7M463.5 230.4V254.8M464.5 233.1V257.7M465.5 238.6V261.9M466.5 242.6V265.9M467.5 247.7V270.1M468.5 251.1V274.6M469.5 255.5V278.7M470.5 260.4V283.1M471.5 264.0V287.3M472.5 267.4V291.0M473.5 271.6V295.9M474.5 276.1V299.3M475.5 281.0V304.6M476.5 283.8V309.6M477.5 289.3V312.6M478.5 294.2V317.0M479.5 297.3V322.7M480.5 301.2V325.3M481.5 306.7V328.6M482.5 309.5V332.9M483.5 314.1V334.5M484.5 314.6V337.4M485.5 316.2V337.0M486.5 317.3V338.2M487.5 317.0V338.9M488.5 316.3V337.9M489.5 314.0V335.5M490.5 311.3V334.4M491.5 308.0V331.5M492.5 303.9V328.9M493.5 301.8V323.4M494.5 296.3V319.3M495.5 292.7V315.5M496.5 287.6V310.8M497.5 283.4V306.1M498.5 279.6V302.0M499.5 275.3V298.4M500.5 271.4V294.1M501.5 267.1V289.2M502.5 262.6V285.5M503.5 258.1V281.5M504.5 254.4V275.8M505.5 249.7V271.9M506.5 246.1V267.3M507.5 240.4V263.3M508.5 238.0V259.4M509.5 232.7V255.7M510.5 227.1V251.9M511.5 225.0V248.6M512.5 222.1V245.6M513.5 219.0V243.3M514.5 217.7V243.2M515.5 216.9V240.9M516.5 216.0V239.6M517.5 217.6V239.8M518.5 216.6V241.6M519.5 218.4V244.6M520.5 219.2V245.6M521.5 224.3V247.3M522.5 227.1V251.7M523.5 232.9V254.5M524.5 234.9V260.1M525.5 241.3V263.4M526.5 242.9V268.9M527.5 248.5V272.9M528.5 252.9V276.1M529.5 256.8V281.6M530.5 262.4V283.3M531.5 264.9V290.3M532.5 269.6V292.3M533.5 274.0V297.4M534.5 278.2V301.4M535.5 282.3V305.6M536.5 287.0V309.6M537.5 290.8V314.3M538.5 296.1V318.9M539.5 299.3V323.2M540.5 303.9V327.8M541.5 307.9V332.0M542.5 311.7V333.7M543.5 313.1V336.6M544.5 315.6V337.3M545.5 315.5V336.8M546.5 317.3V338.7M547.5 316.9V337.1M548.5 315.7V336.8M549.5 313.2V335.9M550.5 309.6V332.8M551.5 305.4V329.5M552.5 301.5V326.5M553.5 298.6V322.6M554.5 294.6V317.3M555.5 290.4V313.3M556.5 286.3V309.5M557.5 281.0V305.1M558.5 277.5V300.6M559.5 273.8V297.8M560.5 268.7V292.2M561.5 263.2V288.1M562.5 260.2V282.4M563.5 256.5V280.1M564.5 251.5V275.2M565.5 247.2V271.8M566.5 242.5V266.8M567.5 240.7V262.8M568.5 235.5V258.5M569.5 230.1V254.4M570.5 227.0V250.0M571.5 223.4V248.4M572.5 221.1V243.8M573.5 217.6V241.7M574.5 217.8V241.8M575.5 217.0V239.8M576.5 215.7V240.3M577.5 216.8V240.3M578.5 217.8V242.6M579.5 219.6V243.3M580.5 220.5V246.2M581.5 225.3V249.2M582.5 228.9V252.4M583.5 234.0V256.8M584.5 237.8V260.4M585.5 241.5V265.5M586.5 245.4V268.7M587.5 250.1V274.6M588.5 254.7V279.0M589.5 258.7V282.0M590.5 262.1V286.1M591.5 268.3V290.9M592.5 272.0V295.4M593.5 275.7V299.0M594.5 280.0V303.9M595.5 284.5V308.0M596.5 288.5V311.3M597.5 292.5V315.4M598.5 297.6V318.8M599.5 301.0V326.2M600.5 305.0V327.8M601.5 308.9V333.0M602.5 311.8V335.1M603.5 314.3V336.4M604.5 318.1V337.8M605.5 316.5V337.8M606.5 317.1V338.4M607.5 316.4V337.9M608.5 313.2V337.0M609.5 311.7V334.5M610.5 307.9V331.7M611.5 304.8V328.6M612.5 300.1V324.6M613.5 297.0V319.5M614.5 292.2V315.5M615.5 289.1V310.1M616.5 283.9V306.5M617.5 279.7V304.0M618.5 275.3V299.3M619.5 270.9V296.3M620.5 267.9V291.5M621.5 262.1V285.7M622.5 259.6V282.1M623.5 254.4V278.3M624.5 249.5V274.3M625.5 246.1V269.9M626.5 241.4V265.7M627.5 237.2V261.8M628.5 234.2V257.5M629.5 229.6V253.3M630.5 223.3V249.9M631.5 221.8V246.5M632.5 219.2V243.1M633.5 217.3V242.7M634.5 217.7V240.5M635.5 215.8V241.2M636.5 215.9V241.9M637.5 217.1V240.8M638.5 219.0V244.0M639.5 219.4V246.0M640.5 223.0V248.6M641.5 226.5V249.6M642.5 231.3V255.0M643.5 236.6V259.8M644.5 239.9V262.6M645.5 243.2V266.8M646.5 247.2V271.1M647.5 250.3V275.6M648.5 256.3V281.5M649.5 261.0V283.6M650.5 265.1V287.3M651.5 268.5V291.1M652.5 274.2V297.0M653.5 276.6V300.8M654.5 282.3V305.4M655.5 286.1V308.7M656.5 289.7V313.6M657.5 295.0V317.2M658.5 297.8V322.8M659.5 302.1V327.0M660.5 307.0V330.7M661.5 311.4V333.7M662.5 313.4V334.9M663.5 314.5V337.6M664.5 317.4V339.0M665.5 318.7V338.3M666.5 316.7V338.8M667.5 315.3V337.3M668.5 312.6V336.6M669.5 310.0V334.1M670.5 306.6V331.6M671.5 302.9V327.7M672.5 298.3V322.5M673.5 296.0V318.0M674.5 291.0V314.0M675.5 285.1V310.4M676.5 282.8V305.2M677.5 278.7V301.1M678.5 273.3V297.5M679.5 269.3V294.8M680.5 264.5V289.5M681.5 262.0V283.4M682.5 255.9V281.0M683.5 252.6V276.6M684.5 249.5V271.8M685.5 243.7V266.0M686.5 240.4V263.0M687.5 236.2V259.6M688.5 230.8V256.4M689.5 228.3V252.0M690.5 223.0V247.8M691.5 220.5V245.1M692.5 217.9V243.5M693.5 217.4V241.9M694.5 216.2V241.5M695.5 216.6V238.2M696.5 216.2V240.7M697.5 218.1V241.7M698.5 218.9V243.2M699.5 221.9V245.6M700.5 224.1V248.2M701.5 228.8V251.7M702.5 231.4V256.5M703.5 236.3V260.5M704.5 241.3V265.3M705.5 246.0V268.3M706.5 249.4V272.0M707.5 254.9V277.5M708.5 259.0V281.2M709.5 260.8V286.7M710.5 266.5V290.0M711.5 270.7V294.5M712.5 275.3V297.2M713.5 279.9V302.2M714.5 283.0V308.0M715.5 288.2V310.8M716.5 290.5V315.3M717.5 296.4V319.4M718.5 299.4V323.1M719.5 303.6V328.0M720.5 308.8V332.1M721.5 310.8V334.4M722.5 314.2V335.9M723.5 315.5V339.1M724.5 316.9V338.7M725.5 316.7V338.2M726.5 314.9V337.9M727.5 315.4V338.4M728.5 313.3V335.6M729.5 309.6V332.2M730.5 306.0V329.8M731.5 301.4V326.0M732.5 297.0V319.9M733.5 292.8V315.8M734.5 288.3V313.5M735.5 284.9V308.6" stroke="#14a814" stroke-width="1" fill="none" shape-rendering="auto"/><path d="M273.5 530.5V557.3M274.5 526.1V554.1M275.5 523.7V551.6M276.5 527.8V576.9M277.5 528.5V565.3M278.5 527.4V552.1M279.5 531.6V577.4M280.5 532.8V560.7M281.5 525.1V563.8M282.5 527.1V543.0M283.5 531.7V555.3M284.5 532.6V547.9M285.5 531.1V578.3M286.5 527.1V562.6M287.5 531.9V574.9M288.5 531.2V558.6M289.5 531.0V554.9M290.5 527.2V573.1M291.5 530.4V545.6M292.5 528.6V554.9M293.5 536.3V558.9M294.5 531.0V556.6M295.5 530.3V547.3M296.5 528.7V554.7M297.5 529.1V541.6M298.5 523.8V539.2M299.5 524.2V552.8M300.5 520.9V558.5M301.5 520.2V563.2M302.5 522.2V571.4M303.5 530.2V554.1M304.5 521.6V556.5M305.5 530.7V551.1M306.5 530.6V578.6M307.5 536.7V567.7M308.5 531.0V567.3M309.5 529.5V555.5M310.5 530.8V580.8M311.5 534.9V559.3M312.5 533.1V555.7M313.5 534.2V553.4M314.5 532.8V569.2M315.5 533.2V571.6M316.5 535.4V551.1M317.5 535.8V553.4M318.5 532.4V572.5M319.5 531.1V563.4M320.5 530.2V567.7M321.5 529.4V572.3M322.5 530.4V573.4M323.5 533.0V554.0M324.5 530.8V579.6M325.5 531.2V578.3M326.5 528.9V562.7M327.5 525.0V563.0M328.5 523.3V555.5M329.5 519.5V552.3M330.5 526.8V569.1M331.5 526.9V575.2M332.5 532.9V553.6M333.5 532.4V551.3M334.5 533.7V562.5M335.5 532.8V563.4M336.5 535.6V556.8M337.5 534.0V557.9M338.5 537.5V566.4M339.5 533.9V562.4M340.5 533.5V564.4M341.5 536.4V584.3M342.5 537.7V555.9M343.5 536.5V582.9M344.5 539.3V574.2M345.5 538.4V580.6M346.5 535.8V563.5M347.5 536.4V568.9M348.5 536.7V563.6M349.5 537.1V556.6M350.5 533.9V564.0M351.5 530.9V549.6M352.5 531.6V559.0M353.5 531.4V558.9M354.5 525.3V557.0M355.5 523.9V541.4M356.5 521.3V554.1M357.5 523.5V547.0M358.5 533.5V553.6M359.5 536.0V558.8M360.5 537.0V563.1M361.5 534.8V557.9M362.5 537.1V568.1M363.5 538.4V566.3M364.5 537.8V560.9M365.5 537.8V555.0M366.5 539.6V586.6M367.5 541.3V555.8M368.5 533.2V571.0M369.5 534.3V573.2M370.5 542.8V567.7M371.5 539.4V557.6M372.5 541.4V587.1M373.5 534.7V575.9M374.5 539.2V576.1M375.5 533.1V579.1M376.5 536.2V571.3M377.5 535.2V581.2M378.5 538.6V567.2M379.5 533.9V563.0M380.5 528.6V560.4M381.5 530.3V560.5M382.5 525.4V551.6M383.5 525.4V558.9M384.5 533.1V577.5M385.5 524.5V563.7M386.5 537.6V572.9M387.5 534.1V569.9M388.5 532.0V564.0M389.5 536.4V571.2M390.5 537.2V573.1M391.5 533.0V584.7M392.5 538.1V569.0M393.5 537.8V564.7M394.5 539.9V572.4M395.5 535.3V573.3M396.5 538.8V568.7M397.5 539.2V573.8M398.5 537.5V577.7M399.5 536.5V582.5M400.5 540.7V583.5M401.5 540.9V574.7M402.5 536.5V581.1M403.5 536.5V579.1M404.5 541.4V568.1M405.5 540.7V590.6M406.5 543.4V565.2M407.5 543.4V564.8M408.5 539.8V573.3M409.5 542.6V589.5M410.5 542.0V591.0M411.5 542.6V570.1M412.5 537.8V581.0M413.5 537.2V574.6M414.5 536.1V576.7M415.5 541.9V565.4M416.5 537.9V567.4M417.5 540.0V579.7M418.5 536.4V572.8M419.5 541.4V584.0M420.5 538.7V567.1M421.5 538.7V581.4M422.5 537.0V566.9M423.5 539.1V570.3M424.5 540.5V568.2M425.5 541.0V583.7M426.5 541.0V569.7M427.5 543.4V576.3M428.5 544.0V567.9M429.5 541.0V559.6M430.5 540.8V570.9M431.5 541.1V567.0M432.5 541.8V592.9M433.5 542.2V578.9M434.5 543.2V576.5M435.5 541.3V576.1M436.5 538.1V579.1M437.5 539.7V566.2M438.5 538.9V566.7M439.5 541.5V584.6M440.5 541.2V560.5M441.5 543.0V568.1M442.5 541.5V568.2M443.5 543.3V577.8M444.5 541.0V579.8M445.5 540.1V577.6M446.5 544.4V575.7M447.5 533.5V567.8M448.5 537.7V569.0M449.5 539.0V572.4M450.5 538.0V594.4M451.5 542.3V567.7M452.5 540.8V575.2M453.5 542.5V578.6M454.5 538.4V575.5M455.5 541.1V584.2M456.5 542.4V564.0M457.5 540.7V581.7M458.5 542.2V571.1M459.5 538.7V565.4M460.5 542.3V569.8M461.5 538.8V595.3M462.5 536.1V575.1M463.5 536.2V575.6M464.5 537.0V568.9M465.5 543.6V568.1M466.5 544.5V588.5M467.5 542.6V583.4M468.5 539.6V573.2M469.5 544.5V565.6M470.5 541.7V574.2M471.5 538.9V569.7M472.5 542.2V574.4M473.5 537.1V572.0M474.5 543.3V570.1M475.5 541.3V580.7M476.5 543.2V578.2M477.5 541.1V576.9M478.5 539.7V592.6M479.5 547.2V574.0M480.5 545.5V576.1M481.5 541.5V578.0M482.5 544.3V575.9M483.5 544.6V568.3M484.5 536.9V576.4M485.5 540.9V587.9M486.5 546.0V572.7M487.5 541.7V566.7M488.5 541.3V575.0M489.5 537.8V596.0M490.5 541.2V571.5M491.5 541.8V576.9M492.5 541.5V584.2M493.5 543.7V579.4M494.5 547.0V583.0M495.5 536.8V582.2M496.5 544.6V579.0M497.5 544.0V583.7M498.5 541.2V579.7M499.5 540.4V582.0M500.5 539.4V583.1M501.5 541.1V566.9M502.5 539.9V580.3M503.5 541.6V571.5M504.5 544.1V586.1M505.5 542.9V575.3M506.5 539.9V576.0M507.5 543.1V583.0M508.5 542.6V581.4M509.5 543.6V578.7M510.5 544.4V588.7M511.5 538.5V574.0M512.5 538.4V585.0M513.5 540.4V596.2M514.5 543.3V578.7M515.5 538.9V573.8M516.5 543.7V584.2M517.5 545.1V592.8M518.5 540.3V576.7M519.5 541.9V572.9M520.5 541.0V575.6M521.5 541.2V571.9M522.5 537.7V577.3M523.5 545.5V577.4M524.5 538.2V561.3M525.5 538.8V569.0M526.5 540.8V577.3M527.5 540.1V574.7M528.5 541.5V568.4M529.5 541.2V570.6M530.5 541.1V570.8M531.5 537.7V575.5M532.5 538.7V570.7M533.5 543.7V574.6M534.5 542.5V576.5M535.5 542.3V580.6M536.5 543.1V569.0M537.5 541.2V571.1M538.5 543.0V574.4M539.5 545.2V576.0M540.5 544.9V568.9M541.5 541.8V572.1M542.5 540.8V579.4M543.5 543.5V576.2M544.5 539.8V579.3M545.5 541.2V596.2M546.5 540.7V580.1M547.5 542.1V568.9M548.5 542.5V571.0M549.5 538.2V571.2M550.5 539.8V573.4M551.5 541.2V587.7M552.5 539.8V583.7M553.5 539.0V573.7M554.5 544.3V586.6M555.5 549.2V576.8M556.5 539.8V571.4M557.5 539.9V596.2M558.5 544.4V596.2M559.5 537.7V590.4M560.5 537.3V593.7M561.5 541.2V585.5M562.5 543.0V574.2M563.5 539.4V579.4M564.5 539.9V573.8M565.5 538.3V576.5M566.5 538.0V575.5M567.5 538.2V584.4M568.5 543.3V566.7M569.5 540.3V574.6M570.5 539.4V583.1M571.5 543.5V589.1M572.5 543.2V586.5M573.5 542.1V587.8M574.5 543.2V573.7M575.5 537.2V568.1M576.5 542.2V571.3M577.5 540.8V569.5M578.5 542.9V575.6M579.5 541.9V573.9M580.5 541.3V573.2M581.5 538.2V565.4M582.5 539.0V567.4M583.5 542.2V577.4M584.5 537.6V575.7M585.5 538.9V596.2M586.5 546.3V577.1M587.5 539.2V578.3M588.5 541.7V581.9M589.5 546.7V587.0M590.5 539.0V596.2M591.5 539.6V564.4M592.5 537.1V579.7M593.5 538.3V568.4M594.5 543.8V573.7M595.5 545.1V576.4M596.5 542.7V581.3M597.5 545.4V572.9M598.5 543.9V589.1M599.5 538.5V589.1M600.5 543.8V583.8M601.5 543.0V573.7M602.5 542.8V571.2M603.5 543.5V579.8M604.5 544.1V574.5M605.5 544.0V589.0M606.5 546.2V575.1M607.5 538.4V582.8M608.5 541.5V578.4M609.5 541.0V564.5M610.5 541.8V576.3M611.5 548.4V596.2M612.5 540.8V582.2M613.5 543.4V596.2M614.5 542.6V580.7M615.5 541.6V578.4M616.5 540.8V586.7M617.5 546.2V581.1M618.5 542.5V591.5M619.5 542.4V580.2M620.5 539.7V570.7M621.5 541.2V580.1M622.5 541.2V584.9M623.5 545.3V571.9M624.5 537.1V596.2M625.5 540.9V568.2M626.5 539.5V574.4M627.5 536.3V574.2M628.5 541.8V570.2M629.5 539.8V569.0M630.5 541.0V577.5M631.5 538.4V579.4M632.5 540.0V567.7M633.5 541.6V573.9M634.5 543.9V567.0M635.5 542.8V573.3M636.5 537.7V583.2M637.5 539.7V576.1M638.5 541.8V596.2M639.5 539.1V574.4M640.5 541.1V564.7M641.5 542.9V584.0M642.5 540.7V579.1M643.5 540.9V596.2M644.5 541.8V572.3M645.5 540.1V576.7M646.5 540.8V576.0M647.5 541.6V574.3M648.5 538.9V591.4M649.5 542.9V571.5M650.5 538.9V582.1M651.5 540.4V590.4M652.5 542.0V585.5M653.5 539.8V582.6M654.5 541.0V593.7M655.5 539.4V582.1M656.5 544.6V580.8M657.5 544.7V580.5M658.5 540.7V589.8M659.5 537.9V569.4M660.5 540.0V596.2M661.5 539.9V575.6M662.5 540.8V563.6M663.5 541.7V585.1M664.5 541.9V576.0M665.5 541.5V577.8M666.5 540.6V584.9M667.5 541.5V596.2M668.5 540.7V586.9M669.5 544.6V569.0M670.5 537.3V571.3M671.5 542.0V569.8M672.5 544.5V576.0M673.5 542.1V570.3M674.5 540.0V586.1M675.5 541.8V577.1M676.5 538.3V589.5M677.5 541.0V584.1M678.5 539.9V577.3M679.5 542.3V583.6M680.5 543.0V595.0M681.5 543.8V596.2M682.5 542.4V596.2M683.5 544.0V577.9M684.5 544.1V579.5M685.5 538.4V583.0M686.5 539.7V596.2M687.5 541.8V577.0M688.5 539.5V570.5M689.5 540.3V581.5M690.5 544.5V564.4M691.5 539.4V585.5M692.5 542.9V572.6M693.5 537.7V589.0M694.5 543.2V588.8M695.5 541.2V570.6M696.5 544.7V592.4M697.5 539.2V572.6M698.5 543.6V573.3M699.5 538.7V582.6M700.5 540.6V578.6M701.5 542.1V575.5M702.5 540.9V574.0M703.5 547.1V574.7M704.5 541.4V579.2M705.5 538.5V567.0M706.5 541.6V574.7M707.5 546.4V581.0M708.5 541.1V573.0M709.5 539.0V577.5M710.5 541.3V587.4M711.5 539.9V572.5M712.5 542.4V581.4M713.5 545.0V587.4M714.5 539.9V571.1M715.5 539.5V574.9M716.5 541.0V575.8M717.5 543.4V569.6M718.5 540.6V592.8M719.5 542.1V594.4M720.5 542.8V578.9M721.5 544.4V573.8M722.5 538.2V585.4M723.5 536.2V572.2M724.5 542.7V582.7M725.5 540.2V565.3M726.5 542.9V572.9M727.5 536.9V596.2M728.5 537.0V569.2M729.5 539.9V574.0M730.5 540.9V575.3M731.5 540.2V573.2M732.5 538.8V585.7M733.5 538.1V566.6M734.5 540.2V571.0M735.5 543.5V575.0" stroke="#9a8800" stroke-width="1" fill="none" shape-rendering="auto"/><path d="M273.5 461.0V548.3M274.5 500.0V547.2M275.5 527.0V553.6M276.5 531.5V558.9M277.5 528.5V569.0M278.5 528.4V561.0M279.5 525.8V565.0M280.5 530.3V566.0M281.5 526.9V581.8M282.5 526.3V556.9M283.5 527.7V560.0M284.5 527.2V578.7M285.5 526.8V557.9M286.5 536.4V566.3M287.5 529.4V571.1M288.5 531.9V582.5M289.5 527.0V552.7M290.5 525.4V562.9M291.5 530.2V581.6M292.5 531.0V561.8M293.5 527.0V561.7M294.5 526.4V561.5M295.5 531.2V570.4M296.5 526.3V578.5M297.5 528.9V571.7M298.5 524.4V556.9M299.5 513.0V575.1M300.5 483.0V546.6M301.5 485.0V544.8M302.5 513.0V548.9M303.5 525.8V552.1M304.5 526.8V566.2M305.5 527.0V566.5M306.5 529.0V578.6M307.5 531.8V563.9M308.5 534.0V577.4M309.5 531.2V579.4M310.5 528.1V557.9M311.5 535.0V556.0M312.5 529.6V548.9M313.5 533.0V585.5M314.5 535.4V576.0M315.5 533.1V563.5M316.5 529.5V573.0M317.5 531.4V571.3M318.5 529.6V563.6M319.5 534.1V555.8M320.5 534.0V580.9M321.5 535.2V572.6M322.5 533.6V580.0M323.5 532.1V559.4M324.5 529.3V570.6M325.5 528.4V566.8M326.5 528.6V561.7M327.5 516.0V551.6M328.5 486.0V545.0M329.5 488.0V568.2M330.5 516.0V559.7M331.5 529.1V549.5M332.5 532.4V555.2M333.5 532.7V563.5M334.5 529.8V554.6M335.5 531.2V577.5M336.5 537.0V565.5M337.5 529.1V560.7M338.5 534.5V563.5M339.5 534.3V569.0M340.5 531.5V574.3M341.5 534.3V558.1M342.5 535.4V564.3M343.5 531.5V574.0M344.5 536.3V560.6M345.5 530.2V571.6M346.5 532.9V560.3M347.5 535.2V563.7M348.5 536.6V576.0M349.5 534.1V564.4M350.5 531.0V572.6M351.5 532.0V566.9M352.5 531.1V556.4M353.5 534.2V564.0M354.5 519.5V572.9M355.5 489.5V577.3M356.5 491.5V563.2M357.5 519.5V573.7M358.5 535.8V566.1M359.5 534.5V556.0M360.5 532.7V574.8M361.5 537.9V568.4M362.5 531.9V570.1M363.5 537.2V561.9M364.5 536.1V568.0M365.5 535.3V566.0M366.5 540.3V577.4M367.5 537.1V569.7M368.5 535.4V576.2M369.5 537.0V568.7M370.5 537.5V568.6M371.5 539.4V561.8M372.5 538.0V566.9M373.5 537.5V558.8M374.5 536.9V573.7M375.5 539.3V562.5M376.5 538.5V580.4M377.5 535.3V577.2M378.5 533.7V556.2M379.5 533.9V566.3M380.5 531.4V574.6M381.5 528.2V568.1M382.5 501.0V572.1M383.5 503.0V559.1M384.5 530.4V567.3M385.5 531.3V565.8M386.5 534.6V567.2M387.5 536.9V562.4M388.5 536.4V574.2M389.5 540.8V576.9M390.5 538.7V563.0M391.5 538.6V587.1M392.5 539.8V576.9M393.5 540.8V585.8M394.5 540.5V574.0M395.5 541.4V565.2M396.5 539.2V593.6M397.5 539.0V577.9M398.5 538.5V590.1M399.5 543.9V570.6M400.5 542.2V577.7M401.5 541.9V573.4M402.5 541.2V575.7M403.5 536.2V571.5M404.5 542.4V567.6M405.5 540.3V585.4M406.5 539.8V574.0M407.5 542.2V580.2M408.5 537.5V582.5M409.5 544.2V586.6M410.5 543.6V562.7M411.5 542.4V587.4M412.5 539.1V573.2M413.5 541.7V575.9M414.5 543.9V587.7M415.5 544.0V573.9M416.5 543.3V575.8M417.5 542.3V588.8M418.5 539.3V583.0M419.5 539.9V566.8M420.5 541.1V571.6M421.5 542.3V586.0M422.5 543.4V577.0M423.5 547.1V573.9M424.5 544.1V593.2M425.5 541.5V576.5M426.5 545.7V576.9M427.5 540.5V574.9M428.5 546.3V596.6M429.5 543.8V579.8M430.5 544.4V575.4M431.5 543.7V579.3M432.5 541.1V578.5M433.5 541.9V596.6M434.5 541.2V583.7M435.5 547.7V580.8M436.5 544.8V578.1M437.5 544.4V585.4M438.5 543.4V585.0M439.5 543.1V567.6M440.5 545.9V597.6M441.5 544.1V567.6M442.5 544.2V576.0M443.5 544.5V585.8M444.5 545.9V571.7M445.5 551.4V582.5M446.5 542.6V587.3M447.5 543.8V580.0M448.5 543.4V578.8M449.5 543.1V587.9M450.5 543.7V579.8M451.5 540.6V596.3M452.5 546.4V582.9M453.5 546.6V587.1M454.5 544.7V571.1M455.5 543.2V570.7M456.5 548.6V575.5M457.5 545.7V581.5M458.5 549.4V582.9M459.5 547.9V587.9M460.5 551.4V596.5M461.5 545.8V570.8M462.5 546.4V572.0M463.5 545.5V574.1M464.5 549.2V569.2M465.5 546.1V573.3M466.5 544.8V589.2M467.5 545.8V583.4M468.5 544.0V574.4M469.5 546.8V573.8M470.5 548.7V580.9M471.5 550.1V571.1M472.5 546.0V566.3M473.5 547.9V585.9M474.5 545.4V592.9M475.5 548.6V600.1M476.5 548.3V577.6M477.5 551.8V600.2M478.5 551.4V577.6M479.5 544.0V574.2M480.5 541.0V595.3M481.5 549.2V584.3M482.5 546.8V599.3M483.5 543.1V584.9M484.5 548.7V588.2M485.5 550.3V573.1M486.5 546.9V570.0M487.5 548.0V586.2M488.5 545.2V586.2M489.5 547.9V573.0M490.5 549.3V575.5M491.5 546.1V574.9M492.5 547.1V580.5M493.5 551.1V590.7M494.5 545.5V578.7M495.5 546.1V593.7M496.5 544.6V579.0M497.5 545.9V577.3M498.5 543.7V573.7M499.5 545.6V600.2M500.5 547.1V598.4M501.5 549.4V580.2M502.5 546.6V593.9M503.5 544.7V576.7M504.5 547.7V584.1M505.5 544.9V570.7M506.5 542.4V585.5M507.5 546.6V600.2M508.5 548.0V574.6M509.5 545.3V578.2M510.5 544.7V578.5M511.5 547.5V577.9M512.5 546.0V573.3M513.5 547.4V600.2M514.5 550.3V595.1M515.5 545.8V580.3M516.5 548.8V586.3M517.5 541.5V578.7M518.5 546.0V580.6M519.5 545.8V572.6M520.5 549.2V583.8M521.5 545.3V600.2M522.5 552.1V573.8M523.5 551.0V591.2M524.5 546.0V588.0M525.5 550.0V572.9M526.5 545.4V575.0M527.5 547.4V576.3M528.5 545.8V579.3M529.5 548.2V575.8M530.5 542.7V581.0M531.5 545.2V564.7M532.5 546.1V589.7M533.5 548.7V574.5M534.5 547.8V573.6M535.5 543.7V590.6M536.5 547.3V577.3M537.5 547.3V574.9M538.5 550.3V577.5M539.5 551.4V587.7M540.5 547.7V577.4M541.5 546.6V596.7M542.5 548.2V575.2M543.5 547.2V584.6M544.5 548.1V583.4M545.5 546.3V582.9M546.5 546.2V600.2M547.5 547.4V572.6M548.5 547.7V582.3M549.5 547.3V580.3M550.5 543.2V573.7M551.5 549.4V591.8M552.5 547.2V581.8M553.5 548.8V583.1M554.5 547.9V590.0M555.5 546.4V584.1M556.5 543.9V588.4M557.5 549.3V582.7M558.5 549.0V600.2M559.5 547.0V582.3M560.5 546.4V600.2M561.5 549.8V576.0M562.5 550.1V575.3M563.5 546.9V583.8M564.5 544.7V579.6M565.5 541.5V576.1M566.5 547.4V578.0M567.5 544.9V593.5M568.5 546.8V582.6M569.5 546.9V586.7M570.5 545.3V574.0M571.5 551.3V574.7M572.5 545.6V580.1M573.5 546.6V583.3M574.5 546.5V567.4M575.5 544.3V568.2M576.5 546.9V574.2M577.5 546.8V578.3M578.5 545.7V579.5M579.5 548.5V581.5M580.5 547.1V600.2M581.5 548.4V585.1M582.5 545.4V585.8M583.5 545.5V567.6M584.5 550.3V569.5M585.5 549.6V572.1M586.5 550.4V591.6M587.5 546.8V565.8M588.5 551.0V592.2M589.5 553.1V585.3M590.5 547.8V578.6M591.5 547.5V599.4M592.5 546.6V577.8M593.5 547.0V574.0M594.5 544.3V588.2M595.5 545.8V591.5M596.5 544.1V577.1M597.5 546.4V579.4M598.5 550.2V575.2M599.5 545.7V586.7M600.5 543.2V577.2M601.5 545.3V586.7M602.5 548.6V586.3M603.5 547.3V598.5M604.5 545.8V574.0M605.5 545.7V577.0M606.5 546.1V580.3M607.5 545.2V590.2M608.5 549.3V597.4M609.5 547.4V570.9M610.5 545.4V588.3M611.5 548.7V600.2M612.5 543.7V591.2M613.5 541.8V576.9M614.5 549.6V589.3M615.5 550.0V578.6M616.5 548.1V599.1M617.5 544.7V591.3M618.5 544.6V583.5M619.5 542.5V584.1M620.5 545.5V583.3M621.5 540.1V576.0M622.5 550.0V578.4M623.5 544.0V572.9M624.5 544.3V579.8M625.5 552.2V582.5M626.5 547.7V597.3M627.5 547.3V574.7M628.5 546.7V577.8M629.5 543.5V590.2M630.5 545.0V572.8M631.5 544.1V586.7M632.5 544.8V586.9M633.5 545.0V596.9M634.5 549.1V582.3M635.5 548.3V589.3M636.5 547.6V575.0M637.5 547.3V577.6M638.5 546.1V577.6M639.5 546.5V579.4M640.5 546.7V569.0M641.5 546.4V583.6M642.5 542.8V574.3M643.5 547.2V575.1M644.5 544.8V580.1M645.5 549.6V586.1M646.5 547.2V600.2M647.5 548.0V600.2M648.5 547.2V575.7M649.5 543.2V583.3M650.5 546.8V568.7M651.5 547.9V577.7M652.5 544.9V574.3M653.5 549.4V572.8M654.5 547.1V586.4M655.5 549.2V596.7M656.5 545.9V575.2M657.5 545.7V568.5M658.5 549.0V577.9M659.5 541.3V573.0M660.5 547.6V593.1M661.5 546.6V586.5M662.5 546.4V588.3M663.5 542.5V566.6M664.5 546.4V581.1M665.5 547.3V575.4M666.5 546.2V595.1M667.5 548.1V582.3M668.5 549.4V571.9M669.5 545.9V576.2M670.5 544.0V576.0M671.5 546.9V573.2M672.5 543.3V590.0M673.5 543.2V582.5M674.5 547.4V578.5M675.5 547.8V587.4M676.5 546.6V577.0M677.5 545.3V587.6M678.5 544.5V578.3M679.5 544.6V586.6M680.5 550.8V590.0M681.5 545.2V578.9M682.5 543.6V582.2M683.5 546.9V568.3M684.5 545.2V592.4M685.5 543.5V575.2M686.5 546.1V579.0M687.5 546.4V574.0M688.5 546.7V600.2M689.5 547.7V573.7M690.5 546.4V579.1M691.5 548.6V569.6M692.5 548.5V586.7M693.5 549.2V576.6M694.5 543.0V576.2M695.5 546.4V583.5M696.5 550.1V576.9M697.5 547.0V581.2M698.5 547.3V600.2M699.5 546.1V600.2M700.5 551.5V592.7M701.5 544.3V578.0M702.5 544.0V588.9M703.5 546.4V600.2M704.5 549.9V579.5M705.5 548.6V585.6M706.5 547.8V582.5M707.5 546.9V586.4M708.5 546.3V575.9M709.5 548.7V585.1M710.5 542.9V573.3M711.5 548.1V578.8M712.5 547.0V588.5M713.5 545.8V598.1M714.5 541.1V570.6M715.5 546.4V569.7M716.5 543.0V573.2M717.5 547.8V573.8M718.5 551.2V579.4M719.5 545.8V568.5M720.5 545.9V596.0M721.5 548.3V577.9M722.5 550.0V575.4M723.5 549.6V569.8M724.5 550.0V579.9M725.5 544.8V567.9M726.5 547.8V573.3M727.5 549.6V592.5M728.5 546.2V587.6M729.5 545.8V584.4M730.5 549.9V579.8M731.5 549.1V586.0M732.5 544.6V583.8M733.5 542.2V578.2M734.5 549.1V579.2M735.5 547.6V572.3" stroke="#006400" stroke-width="1" fill="none" shape-rendering="auto"/></g><rect x="272.5" y="148.5" width="464" height="458" fill="none" stroke="#e6e6e6" stroke-width="1"/><polygon points="496.5,148 512.5,148 504.5,158" fill="#ffa500" shape-rendering="auto"/><polygon points="273,278.5 283,286 273,293.5" fill="#ffa500" shape-rendering="auto"/><polygon points="736,416 727,423.5 736,431" fill="#c8b400" shape-rendering="auto"/></svg>
<div class="t" style="left:263.09px;top:128.14px;font-size:12px;color:#f0f0f0;transform:scaleX(0.9100);transform-origin:0 0;">-4m</div>
<div class="t" style="left:304.89px;top:128.14px;font-size:12px;color:#f0f0f0;transform:scaleX(0.9100);transform-origin:0 0;">-3.2m</div>
<div class="t" style="left:351.24px;top:128.14px;font-size:12px;color:#f0f0f0;transform:scaleX(0.9100);transform-origin:0 0;">-2.4m</div>
<div class="t" style="left:397.59px;top:128.14px;font-size:12px;color:#f0f0f0;transform:scaleX(0.9100);transform-origin:0 0;">-1.6m</div>
<div class="t" style="left:443.94px;top:128.14px;font-size:12px;color:#f0f0f0;transform:scaleX(0.9100);transform-origin:0 0;">-800u</div>
<div class="t" style="left:501.21px;top:128.14px;font-size:12px;color:#f0f0f0;transform:scaleX(0.9100);transform-origin:0 0;">0</div>
<div class="t" style="left:538.46px;top:128.14px;font-size:12px;color:#f0f0f0;transform:scaleX(0.9100);transform-origin:0 0;">800u</div>
<div class="t" style="left:584.81px;top:128.14px;font-size:12px;color:#f0f0f0;transform:scaleX(0.9100);transform-origin:0 0;">1.6m</div>
<div class="t" style="left:631.16px;top:128.14px;font-size:12px;color:#f0f0f0;transform:scaleX(0.9100);transform-origin:0 0;">2.4m</div>
<div class="t" style="left:677.51px;top:128.14px;font-size:12px;color:#f0f0f0;transform:scaleX(0.9100);transform-origin:0 0;">3.2m</div>
<div class="t" style="left:728.41px;top:128.14px;font-size:12px;color:#f0f0f0;transform:scaleX(0.9100);transform-origin:0 0;">4m</div>
<div class="t" style="left:248.96px;top:142.64px;font-size:12px;color:#f0f000;transform:scaleX(0.9100);transform-origin:0 0;">12m</div>
<div class="t" style="left:738.00px;top:142.64px;font-size:12px;color:#b0a000;transform:scaleX(0.9100);transform-origin:0 0;">240</div>
<div class="t" style="left:255.03px;top:187.64px;font-size:12px;color:#f0f000;transform:scaleX(0.9100);transform-origin:0 0;">8m</div>
<div class="t" style="left:738.00px;top:187.64px;font-size:12px;color:#b0a000;transform:scaleX(0.9100);transform-origin:0 0;">200</div>
<div class="t" style="left:255.03px;top:233.64px;font-size:12px;color:#f0f000;transform:scaleX(0.9100);transform-origin:0 0;">4m</div>
<div class="t" style="left:738.00px;top:233.64px;font-size:12px;color:#b0a000;transform:scaleX(0.9100);transform-origin:0 0;">160</div>
<div class="t" style="left:264.13px;top:279.64px;font-size:12px;color:#f0f000;transform:scaleX(0.9100);transform-origin:0 0;">0</div>
<div class="t" style="left:738.00px;top:279.64px;font-size:12px;color:#b0a000;transform:scaleX(0.9100);transform-origin:0 0;">120</div>
<div class="t" style="left:251.39px;top:325.64px;font-size:12px;color:#f0f000;transform:scaleX(0.9100);transform-origin:0 0;">-4m</div>
<div class="t" style="left:738.00px;top:325.64px;font-size:12px;color:#b0a000;transform:scaleX(0.9100);transform-origin:0 0;">80</div>
<div class="t" style="left:251.39px;top:371.64px;font-size:12px;color:#f0f000;transform:scaleX(0.9100);transform-origin:0 0;">-8m</div>
<div class="t" style="left:738.00px;top:371.64px;font-size:12px;color:#b0a000;transform:scaleX(0.9100);transform-origin:0 0;">40</div>
<div class="t" style="left:245.32px;top:417.64px;font-size:12px;color:#f0f000;transform:scaleX(0.9100);transform-origin:0 0;">-12m</div>
<div class="t" style="left:738.00px;top:417.64px;font-size:12px;color:#b0a000;transform:scaleX(0.9100);transform-origin:0 0;">0</div>
<div class="t" style="left:245.32px;top:462.64px;font-size:12px;color:#f0f000;transform:scaleX(0.9100);transform-origin:0 0;">-16m</div>
<div class="t" style="left:738.00px;top:462.64px;font-size:12px;color:#b0a000;transform:scaleX(0.9100);transform-origin:0 0;">-40</div>
<div class="t" style="left:245.32px;top:508.64px;font-size:12px;color:#f0f000;transform:scaleX(0.9100);transform-origin:0 0;">-20m</div>
<div class="t" style="left:738.00px;top:508.64px;font-size:12px;color:#b0a000;transform:scaleX(0.9100);transform-origin:0 0;">-80</div>
<div class="t" style="left:245.32px;top:554.64px;font-size:12px;color:#f0f000;transform:scaleX(0.9100);transform-origin:0 0;">-24m</div>
<div class="t" style="left:738.00px;top:554.64px;font-size:12px;color:#b0a000;transform:scaleX(0.9100);transform-origin:0 0;">-120</div>
<div class="t" style="left:245.32px;top:600.64px;font-size:12px;color:#f0f000;transform:scaleX(0.9100);transform-origin:0 0;">-28m</div>
<div class="t" style="left:738.00px;top:600.64px;font-size:12px;color:#b0a000;transform:scaleX(0.9100);transform-origin:0 0;">-160</div>
<div class="t" style="left:269.46px;top:614.34px;font-size:12px;color:#f0f0f0;transform:scaleX(0.9100);transform-origin:0 0;">0</div>
<div class="t" style="left:310.05px;top:614.34px;font-size:12px;color:#f0f0f0;transform:scaleX(0.9100);transform-origin:0 0;">50k</div>
<div class="t" style="left:353.36px;top:614.34px;font-size:12px;color:#f0f0f0;transform:scaleX(0.9100);transform-origin:0 0;">100k</div>
<div class="t" style="left:399.71px;top:614.34px;font-size:12px;color:#f0f0f0;transform:scaleX(0.9100);transform-origin:0 0;">150k</div>
<div class="t" style="left:446.06px;top:614.34px;font-size:12px;color:#f0f0f0;transform:scaleX(0.9100);transform-origin:0 0;">200k</div>
<div class="t" style="left:492.41px;top:614.34px;font-size:12px;color:#f0f0f0;transform:scaleX(0.9100);transform-origin:0 0;">250k</div>
<div class="t" style="left:538.76px;top:614.34px;font-size:12px;color:#f0f0f0;transform:scaleX(0.9100);transform-origin:0 0;">300k</div>
<div class="t" style="left:585.11px;top:614.34px;font-size:12px;color:#f0f0f0;transform:scaleX(0.9100);transform-origin:0 0;">350k</div>
<div class="t" style="left:631.46px;top:614.34px;font-size:12px;color:#f0f0f0;transform:scaleX(0.9100);transform-origin:0 0;">400k</div>
<div class="t" style="left:677.81px;top:614.34px;font-size:12px;color:#f0f0f0;transform:scaleX(0.9100);transform-origin:0 0;">450k</div>
<div class="t" style="left:724.16px;top:614.34px;font-size:12px;color:#f0f0f0;transform:scaleX(0.9100);transform-origin:0 0;">500k</div>
<div class="t" style="left:480.60px;top:102.82px;font-size:12.5px;color:#f0f0f0;transform:scaleX(1.0255);transform-origin:0 0;">Time (s)</div>
<div class="t" style="left:460.30px;top:639.92px;font-size:12.5px;color:#f0f0f0;transform:scaleX(1.0276);transform-origin:0 0;">Frequency (Hz)</div>
<div class="t" style="left:220.62px;top:392.5px;font-size:12.5px;color:#f0f000;transform-origin:0 0;transform:rotate(-90deg) scaleX(0.9591);">IN (V)</div>
<div class="t" style="left:787.88px;top:343.7px;font-size:12.5px;color:#b0a000;transform-origin:0 0;transform:rotate(90deg) scaleX(0.9997);">FFT IN (dB)</div>

<div class="t" style="left:801.90px;top:80.04px;font-size:12px;color:#000;font-weight:bold;transform:scaleX(0.9339);transform-origin:0 0;">Scope Analysis</div>
<svg class="a" style="left:984px;top:79px" width="22" height="22" viewBox="0 0 22 22"><circle cx="11" cy="10.9" r="9.9" fill="#0f72b8"/><path d="M6.9 8.3C7.1 5.6 9 4.6 11 4.6C13.5 4.6 15 6.1 15 8C15 10 13.2 10.7 12.1 11.6C11.3 12.3 11.1 13 11.1 14.3" stroke="#fff" stroke-width="2.1" fill="none" stroke-linecap="round"/><circle cx="11.1" cy="16.9" r="1.3" fill="#fff"/></svg>
<div class="a" style="left:796px;top:103px;width:214px;height:20px;background:#fff;"></div>
<svg class="a" style="left:0;top:0" width="1036" height="693" viewBox="0 0 1036 693" shape-rendering="crispEdges"><path d="M796 102.5H1010M796 122.5H1010M796 144.5H1010M796 166.5H1010M796 188.5H1010M796 210.5H1010M796 232.5H1010M796 254.5H1010M796 276.5H1010M796 298.5H1010M796 320.5H1010M796 342.5H1010M796 364.5H1010M796 386.5H1010M796 408.5H1010M796.5 102V409M916.5 102V409M1009.5 102V409" stroke="#a0a0a0" stroke-width="1" fill="none"/></svg>
<div class="t" style="left:805.40px;top:106.64px;font-size:12px;color:#000;transform:scaleX(0.8700);transform-origin:0 0;">Parameter</div>
<div class="t" style="left:924.20px;top:106.64px;font-size:12px;color:#000;transform:scaleX(0.8700);transform-origin:0 0;">Value</div>
<div class="t" style="left:800.00px;top:127.54px;font-size:12px;color:#000;transform:scaleX(0.8700);transform-origin:0 0;">Aquisition Time</div>
<div class="t" style="left:920.60px;top:127.54px;font-size:12px;color:#000;transform:scaleX(0.8700);transform-origin:0 0;">16.38 ms</div>
<div class="t" style="left:800.00px;top:149.54px;font-size:12px;color:#000;transform:scaleX(0.8700);transform-origin:0 0;">Sample Frequency</div>
<div class="t" style="left:920.60px;top:149.54px;font-size:12px;color:#000;transform:scaleX(0.8700);transform-origin:0 0;">1 MHz</div>
<div class="t" style="left:800.00px;top:171.54px;font-size:12px;color:#000;transform:scaleX(0.8700);transform-origin:0 0;">Signal Frequency</div>
<div class="t" style="left:920.60px;top:171.54px;font-size:12px;color:#000;transform:scaleX(0.8700);transform-origin:0 0;">972.8 Hz</div>
<div class="t" style="left:800.00px;top:193.54px;font-size:12px;color:#000;transform:scaleX(0.8700);transform-origin:0 0;">Cycle Count</div>
<div class="t" style="left:920.60px;top:193.54px;font-size:12px;color:#000;transform:scaleX(0.8700);transform-origin:0 0;">15.94</div>
<div class="t" style="left:800.00px;top:215.54px;font-size:12px;color:#000;transform:scaleX(0.8700);transform-origin:0 0;">Samples/Cycle</div>
<div class="t" style="left:920.60px;top:215.54px;font-size:12px;color:#000;transform:scaleX(0.8700);transform-origin:0 0;">1028</div>
<div class="t" style="left:800.00px;top:237.54px;font-size:12px;color:#000;transform:scaleX(0.8700);transform-origin:0 0;">Ripple IN (pk-pk)</div>
<div class="t" style="left:920.60px;top:237.54px;font-size:12px;color:#000;transform:scaleX(0.8700);transform-origin:0 0;">11.06 mV</div>
<div class="t" style="left:800.00px;top:259.54px;font-size:12px;color:#000;transform:scaleX(0.8700);transform-origin:0 0;">Ripple OUT (pk-pk)</div>
<div class="t" style="left:920.60px;top:259.54px;font-size:12px;color:#000;transform:scaleX(0.8700);transform-origin:0 0;">54.03 mV</div>
<div class="t" style="left:800.00px;top:281.54px;font-size:12px;color:#000;transform:scaleX(0.8700);transform-origin:0 0;">Signal FFT Bin</div>
<div class="t" style="left:920.60px;top:281.54px;font-size:12px;color:#000;transform:scaleX(0.8700);transform-origin:0 0;">16</div>
<div class="t" style="left:800.00px;top:303.54px;font-size:12px;color:#000;transform:scaleX(0.8700);transform-origin:0 0;">FFT Bin Size</div>
<div class="t" style="left:920.60px;top:303.54px;font-size:12px;color:#000;transform:scaleX(0.8700);transform-origin:0 0;">61.04 Hz</div>
<div class="t" style="left:800.00px;top:325.54px;font-size:12px;color:#000;transform:scaleX(0.8700);transform-origin:0 0;">FFT IN (pk-pk)</div>
<div class="t" style="left:920.60px;top:325.54px;font-size:12px;color:#000;transform:scaleX(0.8700);transform-origin:0 0;">85.86 uV</div>
<div class="t" style="left:800.00px;top:347.54px;font-size:12px;color:#000;transform:scaleX(0.8700);transform-origin:0 0;">FFT OUT (pk-pk)</div>
<div class="t" style="left:920.60px;top:347.54px;font-size:12px;color:#000;transform:scaleX(0.8700);transform-origin:0 0;">43.21 mV</div>
<div class="t" style="left:800.00px;top:369.54px;font-size:12px;color:#000;transform:scaleX(0.8700);transform-origin:0 0;">Gain (OUT/IN)</div>
<div class="t" style="left:920.60px;top:369.54px;font-size:12px;color:#000;transform:scaleX(0.8700);transform-origin:0 0;">51.53 dB</div>
<div class="t" style="left:800.00px;top:391.54px;font-size:12px;color:#000;transform:scaleX(0.8700);transform-origin:0 0;">Phase (IN-OUT)</div>
<div class="t" style="left:920.60px;top:391.54px;font-size:12px;color:#000;transform:scaleX(0.8700);transform-origin:0 0;">123.7 deg</div>
<div class="a" style="left:1011px;top:77px;width:20px;height:589px;border:1px solid #707070;background:#f0f0f0;"></div>
<div class="a" style="left:1012px;top:191px;width:18px;height:67px;background:#fff;"></div>
<div class="t" style="left:1027.16px;top:83.00px;font-size:12px;color:#000;transform-origin:0 0;transform:rotate(90deg) scaleX(0.8999);">GRAPH</div>
<div class="t" style="left:1027.16px;top:132.00px;font-size:12px;color:#000;transform-origin:0 0;transform:rotate(90deg) scaleX(0.8898);">CURSORS</div>
<div class="t" style="left:1027.16px;top:198.40px;font-size:12px;color:#000;transform-origin:0 0;transform:rotate(90deg) scaleX(0.8999);">ANALYSIS</div>

<div class="a" style="left:1px;top:668px;width:1034px;height:1px;background:#dadada;"></div>
<div class="a" style="left:1px;top:669px;width:1034px;height:1px;background:#f2f2f2;"></div>
<div class="a" style="left:1px;top:670px;width:1034px;height:1px;background:#dadada;"></div>
<div class="t" style="left:5.00px;top:676.34px;font-size:12px;color:#000;transform:scaleX(0.9556);transform-origin:0 0;">AC Meter?</div>
<div class="t" style="left:72.50px;top:676.34px;font-size:12px;color:#000;transform:scaleX(0.9795);transform-origin:0 0;">Idle - No Probe Voltage</div>
<div class="a" style="left:1030px;top:679px;width:2px;height:2px;background:#a0a0a0;"></div>
<div class="a" style="left:1026px;top:683px;width:2px;height:2px;background:#a0a0a0;"></div>
<div class="a" style="left:1030px;top:683px;width:2px;height:2px;background:#a0a0a0;"></div>
<div class="a" style="left:1022px;top:687px;width:2px;height:2px;background:#a0a0a0;"></div>
<div class="a" style="left:1026px;top:687px;width:2px;height:2px;background:#a0a0a0;"></div>
<div class="a" style="left:1030px;top:687px;width:2px;height:2px;background:#a0a0a0;"></div>

</body></html>
